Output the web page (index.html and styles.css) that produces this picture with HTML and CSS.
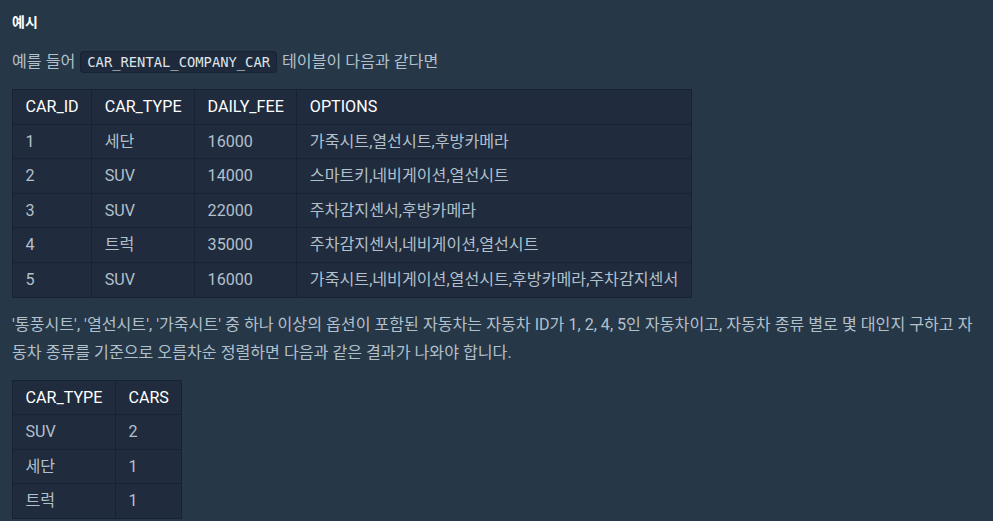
FILE: index.html
```html
<!DOCTYPE html>
<html lang="ko">
<head>
<meta charset="utf-8">
<link rel="stylesheet" href="styles.css">
</head>
<body>
<div class="markdown">
  <h5 class="title">예시</h5>
  <p>예를 들어 <code>CAR_RENTAL_COMPANY_CAR</code> 테이블이 다음과 같다면</p>
  <table class="grid">
    <thead>
      <tr><th>CAR_ID</th><th>CAR_TYPE</th><th>DAILY_FEE</th><th>OPTIONS</th></tr>
    </thead>
    <tbody>
      <tr><td>1</td><td>세단</td><td>16000</td><td>가죽시트,열선시트,후방카메라</td></tr>
      <tr><td>2</td><td>SUV</td><td>14000</td><td>스마트키,네비게이션,열선시트</td></tr>
      <tr><td>3</td><td>SUV</td><td>22000</td><td>주차감지센서,후방카메라</td></tr>
      <tr><td>4</td><td>트럭</td><td>35000</td><td>주차감지센서,네비게이션,열선시트</td></tr>
      <tr><td>5</td><td>SUV</td><td>16000</td><td>가죽시트,네비게이션,열선시트,후방카메라,주차감지센서</td></tr>
    </tbody>
  </table>
  <p>'통풍시트', '열선시트', '가죽시트' 중 하나 이상의 옵션이 포함된 자동차는 자동차 ID가 1, 2, 4, 5인 자동차이고, 자동차 종류 별로 몇 대인지 구하고 자동차 종류를 기준으로 오름차순 정렬하면 다음과 같은 결과가 나와야 합니다.</p>
  <table class="grid">
    <thead>
      <tr><th>CAR_TYPE</th><th>CARS</th></tr>
    </thead>
    <tbody>
      <tr><td>SUV</td><td>2</td></tr>
      <tr><td>세단</td><td>1</td></tr>
      <tr><td>트럭</td><td>1</td></tr>
    </tbody>
  </table>
</div>
</body>
</html>
```

FILE: styles.css
```css
html, body {
  margin: 0;
  padding: 0;
  background: #263747;
}

body {
  font-family: Roboto, "Noto Sans CJK KR", sans-serif;
  color: #b2c0cc;
  font-size: 16.125px;
}

.markdown {
  padding: 10px 12px 0 12px;
}

.title {
  margin: 0 0 14px 0;
  font-size: 14px;
  line-height: 24px;
  font-weight: 700;
  color: #ffffff;
}

p {
  margin: 0 0 13px 0;
  line-height: 28px;
}

code {
  font-family: "DejaVu Sans Mono", monospace;
  font-size: 13.8px;
  color: #dfe5ea;
  background: #1e2a3b;
  border: 1px solid #172334;
  border-radius: 4px;
  padding: 2px 6px;
  margin: 0 1px;
}

.grid {
  border-collapse: collapse;
  background: #202b3d;
  margin: 0 0 13px 0;
}

.grid th,
.grid td {
  border: 1px solid #172334;
  padding: 6px 12.5px;
  line-height: 21.6px;
  text-align: left;
  white-space: nowrap;
}

.grid th {
  color: #ffffff;
  font-weight: 400;
}
```
